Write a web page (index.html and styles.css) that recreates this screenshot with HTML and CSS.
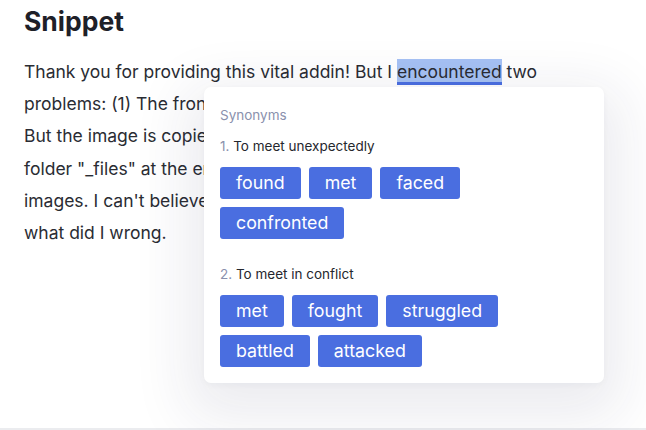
FILE: index.html
```html
<!DOCTYPE html>
<html>
<head>
<meta charset="utf-8">
<link rel="stylesheet" href="styles.css">
</head>
<body>
<div class="page">
  <h1 class="title">Snippet</h1>
  <p class="text">
    <span class="line">Thank you for providing this vital addin! But I <span class="hl">encountered</span> two</span>
    <span class="line">problems: (1) The front page layout is lost when I save it.</span>
    <span class="line">But the image is copied to the same folder as the</span>
    <span class="line">folder "_files" at the end of the name with all the</span>
    <span class="line">images. I can't believe it is so hard. Please tell me</span>
    <span class="line">what did I wrong.</span>
  </p>
  <div class="popup">
    <div class="popup-title">Synonyms</div>
    <div class="sense">
      <div class="sense-head"><span class="num">1.</span> To meet unexpectedly</div>
      <div class="chips">
        <span class="chip">found</span>
        <span class="chip">met</span>
        <span class="chip">faced</span>
        <span class="chip">confronted</span>
      </div>
    </div>
    <div class="sense">
      <div class="sense-head"><span class="num">2.</span> To meet in conflict</div>
      <div class="chips">
        <span class="chip">met</span>
        <span class="chip">fought</span>
        <span class="chip">struggled</span>
        <span class="chip">battled</span>
        <span class="chip">attacked</span>
      </div>
    </div>
  </div>
</div>
</body>
</html>
```
FILE: styles.css
```css
html, body {
  margin: 0;
  padding: 0;
  background: #ffffff;
}
body {
  font-family: Inter, "Noto Sans", sans-serif;
  color: #25272e;
  width: 646px;
  height: 430px;
  overflow: hidden;
}
.page {
  position: relative;
  height: 428px;
  border-bottom: 2px solid #ebecef;
  padding: 0 24px;
}
.title {
  margin: 0;
  padding-top: 5px;
  font-size: 26.5px;
  font-weight: 700;
  line-height: 32px;
  color: #1e2028;
}
.text {
  margin: 19px 0 0 0;
  font-size: 17.5px;
  line-height: 32.2px;
  color: #2a2c33;
}
.line {
  display: block;
  white-space: nowrap;
}
.hl {
  background: #a6c2f4;
  border-bottom: 3px solid #4a6ee0;
  padding: 2px 0 0 0;
}
.popup {
  position: absolute;
  left: 204px;
  top: 87px;
  width: 400px;
  height: 296px;
  box-sizing: border-box;
  background: #ffffff;
  border-radius: 7px;
  padding: 19px 16px 0 16px;
  box-shadow: 0 18px 56px 18px rgba(30, 40, 80, 0.085), 0 2px 6px rgba(30, 40, 80, 0.04);
}
.popup-title {
  font-size: 13.5px;
  line-height: 18px;
  color: #8a91ad;
}
.sense {
  margin-top: 13px;
}
.sense + .sense {
  margin-top: 26px;
}
.sense-head {
  font-size: 13.5px;
  line-height: 18px;
  color: #25272e;
}
.num {
  color: #8a91ad;
}
.chips {
  display: flex;
  flex-wrap: wrap;
  gap: 8px;
  margin-top: 12px;
  max-width: 300px;
}
.chip {
  display: inline-block;
  background: #4a6ee0;
  color: #ffffff;
  border-radius: 3px;
  height: 32px;
  line-height: 32px;
  padding: 0 16px;
  font-size: 17.8px;
}
```
